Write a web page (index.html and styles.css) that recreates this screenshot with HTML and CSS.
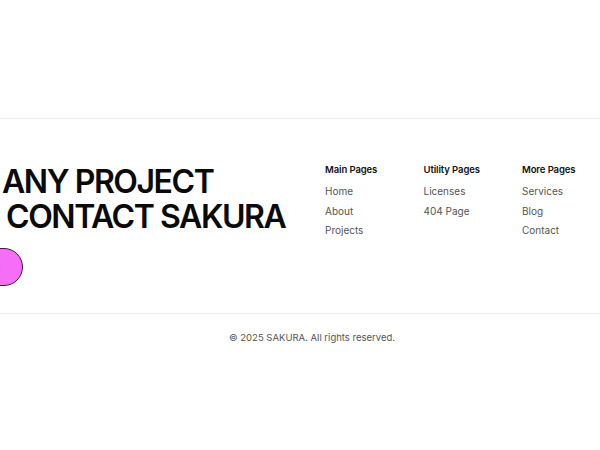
FILE: index.html
```html
<!DOCTYPE html>
<html>
<head>
<meta charset="utf-8">
<link rel="stylesheet" href="styles.css">
</head>
<body>
<div class="top"></div>
<footer class="footer">
  <div class="main">
    <div class="hero">
      <h2 class="title"><span class="l1">ANY PROJECT</span><span class="l2">CONTACT SAKURA</span></h2>
      <a class="btn" href="#"><span class="arrow">↗</span></a>
    </div>
    <nav class="cols">
      <div class="col">
        <h3>Main Pages</h3>
        <a href="#">Home</a>
        <a href="#">About</a>
        <a href="#">Projects</a>
      </div>
      <div class="col">
        <h3>Utility Pages</h3>
        <a href="#">Licenses</a>
        <a href="#">404 Page</a>
      </div>
      <div class="col">
        <h3>More Pages</h3>
        <a href="#">Services</a>
        <a href="#">Blog</a>
        <a href="#">Contact</a>
      </div>
    </nav>
  </div>
  <div class="bottom">© 2025 SAKURA. All rights reserved.</div>
</footer>
</body>
</html>
```

FILE: styles.css
```css
html, body {
  margin: 0;
  padding: 0;
  background: #ffffff;
  overflow: hidden;
}
body {
  font-family: Inter, "Liberation Sans", sans-serif;
  color: #111;
  width: 600px;
}
.top {
  height: 118px;
}
.footer {
  border-top: 1px solid #ececec;
}
.main {
  display: flex;
  justify-content: space-between;
  padding: 43px 0 27px 0;
  border-bottom: 1px solid #ececec;
}
.hero {
  display: flex;
  flex-direction: column;
  padding-top: 2px;
}
.title {
  margin: 0;
  font-size: 32px;
  font-weight: 600;
  line-height: 35px;
  letter-spacing: -0.045em;
  color: #0a0a0a;
}
.title span {
  display: block;
}
.l1 { padding-left: 2px; }
.l2 { padding-left: 6px; }
.btn {
  display: flex;
  align-items: center;
  justify-content: flex-end;
  margin-top: 14px;
  margin-left: -40px;
  width: 63px;
  height: 38px;
  border-radius: 20px;
  background: #f56ef5;
  border: 1px solid #3b1f3b;
  text-decoration: none;
  color: #222;
  box-sizing: border-box;
}
.arrow {
  font-size: 12px;
  margin-right: 21px;
}
.cols {
  display: flex;
  padding-top: 1px;
}
.col {
  display: flex;
  flex-direction: column;
  width: 98.5px;
}
.col:last-child {
  width: 78px;
}
.col h3 {
  margin: 0 0 5px 0;
  font-size: 9.5px;
  font-weight: 600;
  line-height: 14px;
  color: #111;
  letter-spacing: -0.01em;
}
.col a {
  font-size: 10px;
  line-height: 19.5px;
  color: #555;
  text-decoration: none;
}
.bottom {
  text-align: center;
  font-size: 9.5px;
  color: #555;
  padding-top: 17px;
  padding-left: 24px;
  line-height: 14px;
}
```
